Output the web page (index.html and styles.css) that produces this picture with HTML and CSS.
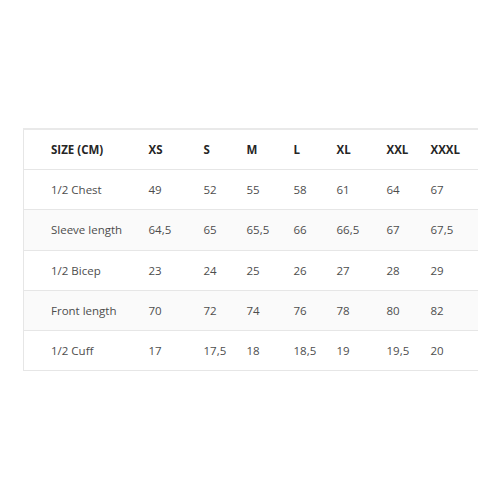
FILE: index.html
```html
<!DOCTYPE html>
<html>
<head>
<meta charset="utf-8">
<link rel="stylesheet" href="styles.css">
</head>
<body>
<div class="page">
<table class="sizes">
<colgroup>
<col class="c-label"><col class="c-xs"><col class="c-s"><col class="c-m"><col class="c-l"><col class="c-xl"><col class="c-xxl"><col class="c-xxxl">
</colgroup>
<thead>
<tr><th>SIZE (CM)</th><th>XS</th><th>S</th><th>M</th><th>L</th><th>XL</th><th>XXL</th><th>XXXL</th></tr>
</thead>
<tbody>
<tr><td>1/2 Chest</td><td>49</td><td>52</td><td>55</td><td>58</td><td>61</td><td>64</td><td>67</td></tr>
<tr class="alt"><td>Sleeve length</td><td>64,5</td><td>65</td><td>65,5</td><td>66</td><td>66,5</td><td>67</td><td>67,5</td></tr>
<tr><td>1/2 Bicep</td><td>23</td><td>24</td><td>25</td><td>26</td><td>27</td><td>28</td><td>29</td></tr>
<tr class="alt"><td>Front length</td><td>70</td><td>72</td><td>74</td><td>76</td><td>78</td><td>80</td><td>82</td></tr>
<tr><td>1/2 Cuff</td><td>17</td><td>17,5</td><td>18</td><td>18,5</td><td>19</td><td>19,5</td><td>20</td></tr>
</tbody>
</table>
</div>
</body>
</html>
```
FILE: styles.css
```css
html, body {
  margin: 0;
  padding: 0;
  background: #ffffff;
}
.page {
  padding: 128px 0 0 23px;
}
.sizes {
  width: 454px;
  table-layout: fixed;
  border-collapse: collapse;
  font-family: "Open Sans", "Liberation Sans", sans-serif;
  font-size: 11.5px;
  color: #4d4d4d;
  border-left: 1px solid #e6e6e6;
  border-top: 2px solid #e9e9e9;
}
.c-label { width: 125px; }
.c-xs { width: 55px; }
.c-s { width: 43px; }
.c-m { width: 47px; }
.c-l { width: 43px; }
.c-xl { width: 50px; }
.c-xxl { width: 44px; }
.c-xxxl { width: 47px; }
.sizes th,
.sizes td {
  height: 39.2px;
  padding: 0;
  text-align: left;
  vertical-align: middle;
  border-bottom: 1px solid #e6e6e6;
  white-space: nowrap;
}
.sizes th {
  font-weight: 700;
  color: #262626;
}
.sizes th:first-child,
.sizes td:first-child {
  padding-left: 27px;
}
.sizes tr.alt td {
  background: #fafafa;
}
```
